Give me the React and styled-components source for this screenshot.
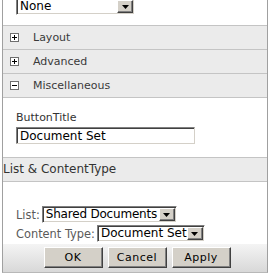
import React from 'react'
import styled, { createGlobalStyle } from 'styled-components'

const GlobalStyle = createGlobalStyle`
    html, body {
        margin: 0;
        padding: 0;
        background: #ffffff;
    }
    body {
        font-family: 'DejaVu Sans', Verdana, sans-serif;
        color: #333333;
    }
`

function Arrow() {
    return (
        <ArrowBtn>
            <svg width='7' height='4' viewBox='0 0 7 4'>
                <path d='M0 0H7L3.5 4Z' fill='#000' />
            </svg>
        </ArrowBtn>
    )
}

function Select({ value, width, tight }) {
    return (
        <SelectBox $w={width}>
            <SelectText $tight={tight}>{value}</SelectText>
            <Arrow />
        </SelectBox>
    )
}

function ToggleIcon({ open }) {
    return (
        <IconBox>
            <svg width='7' height='7' viewBox='0 0 7 7'>
                <rect x='1' y='3' width='5' height='1' fill='#000' />
                {!open && <rect x='3' y='1' width='1' height='5' fill='#000' />}
            </svg>
        </IconBox>
    )
}

function App() {
    return (
        <Page>
            <GlobalStyle />
            <Panel>
                <TopArea>
                    <Select value='None' width={119} />
                </TopArea>
                <Category>
                    <ToggleIcon />
                    <CategoryLabel>Layout</CategoryLabel>
                </Category>
                <Category>
                    <ToggleIcon />
                    <CategoryLabel>Advanced</CategoryLabel>
                </Category>
                <Category>
                    <ToggleIcon open />
                    <CategoryLabel>Miscellaneous</CategoryLabel>
                </Category>
                <Content>
                    <FieldLabel>ButtonTitle</FieldLabel>
                    <TextInput>Document Set</TextInput>
                </Content>
                <SectionHeader>List &amp; ContentType</SectionHeader>
                <ListArea>
                    <FormRow>
                        <RowLabel>List:</RowLabel>
                        <Select value='Shared Documents' width={135} tight />
                    </FormRow>
                    <FormRow>
                        <RowLabel>Content Type:</RowLabel>
                        <Select value='Document Set' width={108} />
                    </FormRow>
                </ListArea>
                <ButtonBar>
                    <Button>OK</Button>
                    <Button>Cancel</Button>
                    <Button>Apply</Button>
                </ButtonBar>
            </Panel>
        </Page>
    )
}

export default App

const Page = styled.div`
    width: 269px;
    height: 277px;
    overflow: hidden;
    background: #ffffff;
`

const Panel = styled.div`
    margin: -8px 0 0 2px;
    width: 264px;
    border-left: 1px solid #a0a0a0;
    border-right: 1px solid #a0a0a0;
    border-bottom: 1px solid #b8b8b8;
    background: #ffffff;
`

const TopArea = styled.div`
    padding: 6px 0 10px 13px;
`

const SelectBox = styled.div`
    display: flex;
    width: ${(p) => p.$w}px;
    height: 17px;
    box-sizing: border-box;
    border: 1px solid;
    border-color: #808080 #ffffff #ffffff #808080;
    box-shadow: inset 1px 1px 0 #404040, inset -1px -1px 0 #d4d0c8;
    padding: 1px;
    background: #ffffff;
`

const SelectText = styled.div`
    flex: 1;
    font-size: 12px;
    line-height: 13px;
    color: #000000;
    padding-left: 2px;
    white-space: nowrap;
    overflow: hidden;
    letter-spacing: ${(p) => (p.$tight ? '-0.2px' : '0')};
`

const ArrowBtn = styled.div`
    width: 16px;
    height: 13px;
    box-sizing: border-box;
    background: #d4d0c8;
    border: 1px solid;
    border-color: #ffffff #404040 #404040 #ffffff;
    box-shadow: inset -1px -1px 0 #808080;
    display: flex;
    align-items: center;
    justify-content: center;
`

const Category = styled.div`
    display: flex;
    align-items: center;
    height: 23px;
    border-top: 1px solid #c4c4c4;
    background: #ebebeb;
    padding-left: 7px;
`

const IconBox = styled.div`
    width: 9px;
    height: 9px;
    box-sizing: border-box;
    border: 1px solid #6e6e6e;
    background: #ffffff;
    display: flex;
`

const CategoryLabel = styled.span`
    margin-left: 14px;
    font-size: 11px;
    color: #3a3a3a;
`

const Content = styled.div`
    border-top: 1px solid #c4c4c4;
    padding: 13px 0 13px 13px;
`

const FieldLabel = styled.div`
    font-size: 11px;
    line-height: 13px;
    margin-bottom: 3px;
    color: #333333;
`

const TextInput = styled.div`
    width: 179px;
    height: 17px;
    box-sizing: border-box;
    border: 1px solid;
    border-color: #808080 #d4d0c8 #d4d0c8 #808080;
    box-shadow: inset 1px 1px 0 #404040;
    padding: 1px 0 0 3px;
    font-size: 12px;
    line-height: 14px;
    color: #000000;
`

const SectionHeader = styled.div`
    height: 23px;
    line-height: 23px;
    border-top: 1px solid #c4c4c4;
    border-bottom: 1px solid #c4c4c4;
    background: #ebebeb;
    font-size: 12px;
    color: #333333;
`

const ListArea = styled.div`
    padding: 24px 0 2px 13px;
    display: flex;
    flex-direction: column;
    gap: 2px;
`

const FormRow = styled.div`
    display: flex;
    align-items: center;
    gap: 2px;
`

const RowLabel = styled.span`
    font-size: 11.4px;
    color: #5a5a5a;
`

const ButtonBar = styled.div`
    height: 28px;
    box-sizing: border-box;
    padding: 3px 0 0 4px;
    display: flex;
    justify-content: center;
    align-items: flex-start;
    gap: 5px;
    background: linear-gradient(#f4f4f4, #d8d8d8);
`

const Button = styled.div`
    width: 59px;
    height: 21px;
    box-sizing: border-box;
    background: #d4d0c8;
    border: 1px solid;
    border-color: #ffffff #404040 #404040 #ffffff;
    box-shadow: inset -1px -1px 0 #808080;
    display: flex;
    align-items: center;
    justify-content: center;
    font-size: 11px;
    color: #000000;
    letter-spacing: 0.5px;
`
